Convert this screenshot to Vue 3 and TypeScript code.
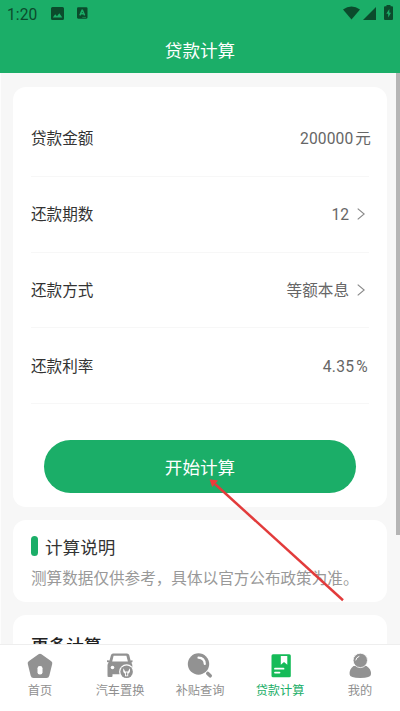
<script setup lang="ts">
interface LoanRow {
  label: string
  value: string
  unit?: string
  kind: 'amount' | 'select' | 'rate'
}

interface Tab {
  label: string
  icon: 'home' | 'car' | 'search' | 'loan' | 'user'
}

const rows: LoanRow[] = [
  { label: '贷款金额', value: '200000', unit: '元', kind: 'amount' },
  { label: '还款期数', value: '12', kind: 'select' },
  { label: '还款方式', value: '等额本息', kind: 'select' },
  { label: '还款利率', value: '4.35', unit: '%', kind: 'rate' },
]

const tabs: Tab[] = [
  { label: '首页', icon: 'home' },
  { label: '汽车置换', icon: 'car' },
  { label: '补贴查询', icon: 'search' },
  { label: '贷款计算', icon: 'loan' },
  { label: '我的', icon: 'user' },
]

const activeTab: Tab['icon'] = 'loan'
</script>

<template>
  <div class="screen">
    <header class="header">
      <div class="status">
        <span class="clock">1:20</span>
        <svg class="status-image" viewBox="0 0 13 13">
          <path fill-rule="evenodd" d="M1.500 0h10Q13 0 13 1.500v10Q13 13 11.500 13h-10Q0 13 0 11.500v-10Q0 0 1.500 0ZM1.800 10.500h9.500L8.300 6.300 6 9.300 4.200 7.200Z" />
        </svg>
        <svg class="status-letter" viewBox="0 0 11 12">
          <rect width="11" height="12" rx="1.200" />
          <path class="status-cut" d="M3 8.500 5.300 3h.4L8 8.500M4 6.800h3" />
          <path class="status-dash" d="M5.500 10.600h4" />
        </svg>
        <span class="status-space"></span>
        <svg class="wifi" viewBox="0 0 18 14"><path d="M0 3.200Q9-3 18 3.200L9 14Z" /></svg>
        <svg class="signal" viewBox="0 0 14 14"><path d="M14 0v14H0Z" /></svg>
        <svg class="battery" viewBox="0 0 9 15">
          <path fill-rule="evenodd" d="M2.500 1.300V0h4v1.300H8q1 0 1 1V14q0 1-1 1H1q-1 0-1-1V2.300q0-1 1-1ZM5.300 4 2.300 8.800h1.900V12.500L7 7.700H5.300Z" />
        </svg>
      </div>
      <h1 class="title">贷款计算</h1>
    </header>

    <main class="content">
      <section class="card form-card">
        <div v-for="row in rows" :key="row.label" class="row">
          <span class="label">{{ row.label }}</span>
          <span class="value" :class="row.kind">
            <span>{{ row.value }}</span>
            <span v-if="row.unit" class="unit">{{ row.unit }}</span>
            <svg v-if="row.kind === 'select'" class="chevron" viewBox="0 0 8 12"><path d="M.7.600 7.200 6 .7 11.400" /></svg>
          </span>
        </div>
        <button class="submit" type="button">开始计算</button>
      </section>

      <section class="card note-card">
        <h2 class="note-title"><i class="marker"></i>计算说明</h2>
        <p class="note">测算数据仅供参考，具体以官方公布政策为准。</p>
      </section>

      <section class="card more-card">
        <h2 class="more-title">更多计算</h2>
      </section>
    </main>

    <nav class="tabs">
      <div v-for="tab in tabs" :key="tab.icon" class="tab" :class="{ active: tab.icon === activeTab }">
        <svg class="tab-icon" viewBox="0 0 26 26">
          <template v-if="tab.icon === 'home'">
            <path d="M11.500 1.200Q13 .2 14.500 1.200L24.300 8.200Q25.700 9.300 25.200 11L22.300 22.800Q21.700 25 19.500 25h-13Q4.300 25 3.700 22.800L.8 11Q.3 9.300 1.700 8.200Z" />
            <rect class="cut" x="10.500" y="13" width="5" height="8.500" rx="2.300" />
          </template>
          <template v-else-if="tab.icon === 'car'">
            <path fill-rule="evenodd" d="M6 .5h14q1.700 0 2.200 1.600L23.600 7.500 25.500 7.300V9l-1.200.7q1 1 1 2.500v7H24v2H2V23q0 1-1 1Q.5 24 .5 22V12.300q0-1.600 1.300-2.800L0 9V7.300l2.500.2L4 2.100Q4.500.5 6 .5ZM6.600 2.800 5.200 8.500h15.700l-1.500-5.700Z" />
            <path d="M1 20h4.500v3q0 1-1 1H2q-1 0-1-1Z" />
            <circle class="cut" cx="5.500" cy="14.500" r="1.800" />
            <circle class="cut" cx="19.600" cy="18.800" r="7.500" />
            <circle cx="19.600" cy="18.800" r="6.300" />
            <path class="cut" d="M16.600 15.200q-1.400 3.600 1.400 5.600v2.500h3.200v-2.500q2.800-2 1.400-5.600l-1.500 3.300h-3Z" />
            <path d="M18.900 19.500h1.400v3h-1.400Z" />
          </template>
          <template v-else-if="tab.icon === 'search'">
            <circle cx="11.500" cy="11" r="10.700" />
            <path class="arc" d="M11.500 4.700Q17.500 5 17.800 11" />
            <path class="handle" d="m20.800 20.500 2.400 2.300" />
          </template>
          <template v-else-if="tab.icon === 'loan'">
            <rect x="4.500" y="1.200" width="19.300" height="23" rx="1.500" />
            <path class="cut" d="M13.800 3h6.500v8.700l-3.300-2.700-3.200 2.700Z" />
            <path class="lines" d="M8 15.700h8.500M8 19.600h4.500" />
          </template>
          <template v-else>
            <path d="M6.500 13h13q4.800 3 4.500 8.200Q23.800 25 13.300 25 2.800 25 2.600 21.200 2.300 16 6.500 13Z" />
            <circle class="halo" cx="13.300" cy="7.400" r="7.200" />
            <path class="shine" d="M8.800 7q.4-2.700 3.200-3.600" />
          </template>
        </svg>
        <span>{{ tab.label }}</span>
      </div>
    </nav>

    <i class="scrollbar"></i>
    <svg class="pointer" viewBox="0 0 136 124">
      <path class="pointer-line" d="M134 121.300 6 5" />
      <path class="pointer-head" d="M.5.200 9 1.400 3.200 8Z" />
    </svg>
  </div>
</template>

<style>
body {
  margin: 0;
  overflow: hidden;
}
</style>

<style scoped>
.screen {
  position: relative;
  display: flex;
  flex-direction: column;
  width: 400px;
  height: 711px;
  overflow: hidden;
  background: #f7f7f7;
  font-family: Roboto, "Noto Sans CJK SC", sans-serif;
  color: #333;
}
.header {
  flex: none;
  height: 73px;
  background: #1bae68;
}
.status {
  display: flex;
  align-items: center;
  box-sizing: border-box;
  height: 27px;
  padding: 0 7px;
  fill: #0b4b2c;
}
.clock {
  width: 44px;
  padding-top: 2px;
  font-size: 15.6px;
  line-height: 26px;
  letter-spacing: 0.1px;
  color: #0b4b2c;
}
.status-image {
  width: 13px;
  height: 13px;
}
.status-letter {
  width: 10.500px;
  height: 12px;
  margin-left: 13px;
  margin-bottom: 1px;
}
.status-cut,
.status-dash {
  fill: none;
  stroke: #1bae68;
  stroke-width: 1.5;
}
.status-dash {
  stroke-width: 0.6;
}
.status-space {
  flex: 1;
}
.wifi {
  width: 17px;
  height: 14px;
  margin-bottom: 1px;
}
.signal {
  width: 13px;
  height: 13px;
  margin-left: 3px;
}
.battery {
  width: 9px;
  height: 15px;
  margin-left: 8px;
  margin-bottom: 2px;
}
.title {
  margin: 11px 0 0;
  font-size: 17.6px;
  font-weight: 400;
  line-height: 26px;
  text-align: center;
  color: #fff;
}
.content {
  flex: 1;
  min-height: 0;
  overflow: hidden;
  display: flex;
  flex-direction: column;
  gap: 13px;
  padding: 14px 13px 0 12px;
  border-left: 1px solid #fdfdfd;
}
.card {
  flex: none;
  box-sizing: border-box;
  padding: 0 18px;
  border-radius: 13px;
  background: #fff;
}
.form-card {
  height: 420px;
  padding-top: 14px;
}
.row {
  display: flex;
  align-items: center;
  justify-content: space-between;
  box-sizing: border-box;
  height: 75.800px;
  padding-top: 2px;
  border-bottom: 1px solid #f7f7f7;
  font-size: 15.6px;
}
.label {
  line-height: 24px;
}
.value {
  display: flex;
  align-items: center;
  line-height: 24px;
  color: #666;
}
.amount {
  gap: 2px;
  margin-right: -2px;
  letter-spacing: 0.1px;
}
.rate {
  gap: 2px;
  margin-right: 1px;
  letter-spacing: 0.3px;
}
.select {
  gap: 8px;
  margin-right: 4px;
}
.chevron {
  width: 8px;
  height: 12px;
  margin-bottom: 2px;
  fill: none;
  stroke: #888;
  stroke-width: 1.2;
}
.submit {
  display: block;
  width: 312px;
  height: 53px;
  margin: 36px auto 0;
  padding: 0;
  border: 0;
  border-radius: 27px;
  background: #1bae68;
  font-family: inherit;
  font-size: 17.6px;
  color: #fff;
}
.note-card {
  height: 82px;
  padding-top: 15px;
}
.note-title {
  display: flex;
  align-items: center;
  gap: 7px;
  margin: 0;
  font-size: 17.6px;
  font-weight: 400;
  line-height: 27px;
}
.marker {
  width: 7px;
  height: 20px;
  margin-bottom: 5px;
  border-radius: 4px;
  background: #1bae68;
}
.note {
  margin: 5px 0 0;
  font-size: 15.6px;
  line-height: 24px;
  white-space: nowrap;
  color: #999;
}
.more-card {
  height: 100px;
  padding-top: 18px;
}
.more-title {
  margin: 0;
  font-size: 17.6px;
  font-weight: 500;
  line-height: 26px;
  color: #222;
}
.tabs {
  z-index: 1;
  flex: none;
  display: grid;
  grid-template-columns: repeat(5, 1fr);
  box-sizing: border-box;
  height: 67px;
  padding-top: 8px;
  border-top: 1px solid #eee;
  background: #fff;
}
.tab {
  display: flex;
  flex-direction: column;
  align-items: center;
  gap: 3px;
  font-size: 12.2px;
  line-height: 18px;
  color: #909090;
  fill: #929292;
}
.active {
  color: #1bae68;
  fill: #15bb58;
}
.tab-icon {
  width: 26px;
  height: 26px;
}
.cut {
  fill: #fff;
}
.arc,
.handle,
.lines,
.shine {
  fill: none;
  stroke: #fff;
  stroke-width: 2.2;
  stroke-linecap: round;
}
.handle {
  stroke: #929292;
  stroke-width: 3.6;
}
.lines {
  stroke-width: 1.8;
}
.shine {
  stroke-width: 1;
}
.halo {
  stroke: #fff;
  stroke-width: 0.8;
}
.scrollbar {
  position: absolute;
  top: 73px;
  right: 0;
  width: 4.500px;
  height: 462px;
  background: #b5b5b5;
}
.pointer {
  position: absolute;
  z-index: 2;
  left: 209px;
  top: 479px;
  width: 136px;
  height: 124px;
}
.pointer-line {
  fill: none;
  stroke: #e23b3b;
  stroke-width: 2.5;
}
.pointer-head {
  fill: #ef3b3b;
}
</style>
